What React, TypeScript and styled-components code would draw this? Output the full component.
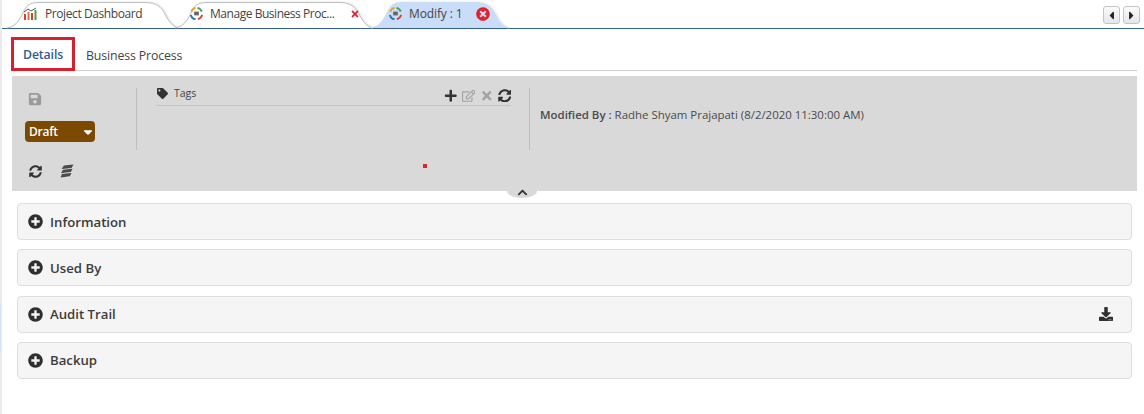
import React from "react";
import styled, { createGlobalStyle } from "styled-components";
import { FaSave, FaTag, FaPlus, FaRegEdit, FaTimes, FaSyncAlt, FaPlusCircle, FaTimesCircle, FaDownload, FaCaretLeft, FaCaretRight, FaCaretDown, FaChevronUp } from "react-icons/fa";

const Global = createGlobalStyle`
  html, body { margin: 0; padding: 0; background: #fff; }
  body { font-family: "Open Sans", "Noto Sans", sans-serif; color: #333; }
  #root { width: 1144px; height: 414px; overflow: hidden; }
`;

const Page = styled.div`
  width: 1144px; height: 414px; box-sizing: border-box; background: #fff;
  border-left: 2px solid #ebebeb; position: relative;
`;
const EdgeSliver = styled.span`
  position: absolute; left: -2px; top: 303px; width: 1px; height: 50px; background: #d4e3fb;
`;
const TabBar = styled.div`
  height: 28px; padding-left: 5px; border-bottom: 1px solid #3a6391;
  display: flex; align-items: flex-end; position: relative;
`;
const Tab = styled.div<{ $w: number; $ml?: number; $pad: number; $track: number }>`
  width: ${p => p.$w}px; height: 27px; margin-left: ${p => p.$ml ?? 0}px;
  padding-left: ${p => p.$pad}px; box-sizing: border-box; position: relative;
  display: flex; align-items: center; font-size: 12px; letter-spacing: ${p => p.$track}px; color: #444;
`;
const TabShape = styled.svg`
  position: absolute; left: 0; top: 0; width: 100%; height: 100%; overflow: visible;
  filter: drop-shadow(1px 0 1px rgba(0, 0, 0, 0.12));
`;
const TabIconBox = styled.span<{ $gap: number }>`
  position: relative; display: inline-flex; margin-right: ${p => p.$gap}px; margin-top: -3px;
`;
const TabLabel = styled.span<{ $w: number }>`
  position: relative; width: ${p => p.$w}px; white-space: nowrap; margin-top: -2px;
`;
const TabClose = styled.span<{ $size: number }>`
  position: relative; display: inline-flex; color: #e0202c; font-size: ${p => p.$size}px; margin-top: -1px;
`;
const Pager = styled.div`
  margin-left: auto; margin-right: 4px; margin-bottom: 4px; display: flex; gap: 3px;
`;
const PagerBtn = styled.span`
  width: 17px; height: 18px; box-sizing: border-box; border: 1px solid #c4c4c4; border-radius: 3px;
  background: linear-gradient(#fbfbfb, #e6e6e6); display: flex; align-items: center; justify-content: center;
  font-size: 13px; color: #222;
`;
const SubTabs = styled.div`
  margin: 8px 7px 0 9px; height: 33px; border-bottom: 1px solid #ccc; display: flex; align-items: stretch;
`;
const SubTab = styled.div<{ $active?: boolean }>`
  font-size: 12.3px; letter-spacing: -0.12px; display: flex; align-items: center; box-sizing: border-box;
  color: ${p => (p.$active ? "#2f5b94" : "#444")};
  font-weight: ${p => (p.$active ? 600 : 400)};
  width: ${p => (p.$active ? "64px" : "auto")};
  padding: ${p => (p.$active ? "1px 0 0 9px" : "3px 0 0 11px")};
  height: ${p => (p.$active ? "34px" : "33px")};
  border: ${p => (p.$active ? "3px solid #d8202c" : "none")};
`;
const Panel = styled.div`
  margin: 5px 7px 0 10px; height: 115px; background: #d9d9d9; position: relative; display: flex;
`;
const ActionCol = styled.div`
  width: 125px; flex: none; display: flex; flex-direction: column;
`;
const ActionTop = styled.div`
  height: 62px; margin-top: 12px; padding-left: 13px; border-right: 1px solid #bebebe; display: flex; flex-direction: column;
`;
const SaveIcon = styled.span`
  display: flex; color: #9a9a9a; font-size: 14px; margin: 4px 0 0 3px;
`;
const StatusBtn = styled.div`
  width: 70px; height: 21px; margin-top: 15px; background: #7b4a00; border-radius: 4px; color: #fff;
  font-size: 12px; font-weight: 600; letter-spacing: -0.25px; display: flex; align-items: center; justify-content: space-between;
  padding: 0 0 0 4px; box-sizing: border-box;
`;
const ActionBottom = styled.div`
  display: flex; gap: 18px; padding: 14px 0 0 17px; align-items: center; font-size: 13px; color: #333;
`;
const TagsCol = styled.div`
  width: 355px; flex: none; margin: 9px 0 0 19px;
`;
const TagsHead = styled.div`
  height: 20px; border-bottom: 1px solid #c4c4c4; display: flex; align-items: center; justify-content: space-between;
`;
const TagsTitle = styled.span`
  display: flex; align-items: center; gap: 6px; font-size: 10.5px; color: #444; margin: -4px 0 0 1px;
  svg { font-size: 11px; color: #333; }
`;
const TagTools = styled.span`
  display: flex; align-items: center; gap: 4.5px; font-size: 13.5px; color: #333; margin-top: 1px;
`;
const ToolIcon = styled.span<{ $muted?: boolean }>`
  display: flex; color: ${p => (p.$muted ? "#a3a3a3" : "#333")};
`;
const Divider = styled.div`
  width: 1px; height: 62px; margin: 12px 10px 0 18px; background: #bebebe; flex: none;
`;
const Modified = styled.div`
  font-size: 11.45px; color: #4a4a4a; margin-top: 31px; white-space: nowrap;
  strong { font-weight: 600; }
`;
const RedDot = styled.span`
  position: absolute; left: 411px; top: 88px; width: 4px; height: 4px; background: #e0202c;
`;
const Collapse = styled.span`
  position: absolute; left: 495px; bottom: -7px; width: 30px; height: 7px; background: #d9d9d9;
  border-radius: 0 0 15px 15px / 0 0 7px 7px; display: flex; justify-content: center; align-items: flex-start;
  font-size: 11px; color: #333; svg { margin-top: -4px; }
`;
const Accordions = styled.div`
  margin: 12px 12px 0 15px; display: flex; flex-direction: column; gap: 9.33px;
`;
const Accordion = styled.div`
  height: 37px; box-sizing: border-box; background: #f5f5f5; border: 1px solid #dedede; border-radius: 4px;
  display: flex; align-items: center; padding: 0 18px 0 10px; font-size: 13.2px; font-weight: 600; color: #3c3c3c;
`;
const AccIcon = styled.span`
  display: flex; font-size: 15px; color: #2f2f2f; margin-right: 7px;
`;
const AccEnd = styled.span`
  margin-left: auto; display: flex; font-size: 14px; color: #2f2f2f;
`;

const Ring = () => (
  <svg width="15" height="15" viewBox="0 0 16 16" fill="none" strokeWidth="2">
    <path d="M2.5 6A6 6 0 0 1 7 2" stroke="#e8a020" />
    <path d="M9 2a6 6 0 0 1 4.6 4" stroke="#3aa655" />
    <path d="M14 9.5A6 6 0 0 1 9.5 14" stroke="#d8402c" />
    <path d="M7 14A6 6 0 0 1 2 9.5" stroke="#2d6fb5" />
    <rect x="5.5" y="6" width="5" height="4" fill="#666" />
  </svg>
);
const Bars = () => (
  <svg width="16" height="13" viewBox="0 0 16 13">
    <rect x="1" y="7" width="2" height="6" fill="#d8402c" />
    <rect x="4.5" y="5" width="2" height="8" fill="#e07a30" />
    <rect x="8" y="6" width="2" height="7" fill="#d8402c" />
    <rect x="11.5" y="3" width="2" height="10" fill="#5a9a4a" />
    <path d="M1 5 L5 2 L8 4 L13 1" stroke="#555" strokeWidth="1" fill="none" />
  </svg>
);
const Stack = () => (
  <svg width="14" height="14" viewBox="0 0 14 14" fill="#4a4a4a">
    <path d="M4 1.5 C7 1 10 1 13.5 .5 L11.5 4 C8 4.5 5 4.5 1.5 5 Z" />
    <path d="M3 5.8 C6 5.5 9 5.2 12.5 4.8 L10.8 8 C7.5 8.5 4 8.7 1 9.2 Z" />
    <path d="M2 10 C5 9.7 8 9.5 11.5 9 L9.8 12.2 C6.5 12.7 3 13 .5 13.4 Z" />
  </svg>
);
const shape = (w: number, fill: string, stroke: string) => (
  <TabShape viewBox={`0 0 ${w} 27`} preserveAspectRatio="none">
    <path d={`M0 27 C8 26 12 20 16 12 C19 5 22 1.5 32 1.5 H${w - 34} C${w - 22} 1.5 ${w - 18} 6 ${w - 14} 13 C${w - 10} 21 ${w - 6} 26 ${w} 27`} fill={fill} stroke={stroke} strokeWidth="1" />
  </TabShape>
);

export default function App() {
  return (
    <Page>
      <Global />
      <EdgeSliver />
      <TabBar>
        <Tab $w={172} $pad={16} $track={-0.41}>
          {shape(172, "#fff", "#bdbdbd")}
          <TabIconBox $gap={6}><Bars /></TabIconBox>
          <TabLabel $w={100}>Project Dashboard</TabLabel>
        </Tab>
        <Tab $w={198} $ml={-4} $pad={14} $track={-0.46}>
          {shape(198, "#fff", "#bdbdbd")}
          <TabIconBox $gap={6}><Ring /></TabIconBox>
          <TabLabel $w={140}>Manage Business Proc...</TabLabel>
          <TabClose $size={10}><FaTimes /></TabClose>
        </Tab>
        <Tab $w={138} $ml={-2} $pad={17} $track={-0.12}>
          {shape(138, "#c9dcf8", "#c9dcf8")}
          <TabIconBox $gap={6}><Ring /></TabIconBox>
          <TabLabel $w={67}>Modify : 1</TabLabel>
          <TabClose $size={14}><FaTimesCircle /></TabClose>
        </Tab>
        <Pager>
          <PagerBtn><FaCaretLeft /></PagerBtn>
          <PagerBtn><FaCaretRight /></PagerBtn>
        </Pager>
      </TabBar>
      <SubTabs>
        <SubTab $active>Details</SubTab>
        <SubTab>Business Process</SubTab>
      </SubTabs>
      <Panel>
        <ActionCol>
          <ActionTop>
            <SaveIcon><FaSave /></SaveIcon>
            <StatusBtn>Draft<FaCaretDown size={14} /></StatusBtn>
          </ActionTop>
          <ActionBottom>
            <FaSyncAlt />
            <Stack />
          </ActionBottom>
        </ActionCol>
        <TagsCol>
          <TagsHead>
            <TagsTitle><FaTag />Tags</TagsTitle>
            <TagTools>
              <ToolIcon><FaPlus /></ToolIcon>
              <ToolIcon $muted><FaRegEdit /></ToolIcon>
              <ToolIcon $muted><FaTimes /></ToolIcon>
              <ToolIcon><FaSyncAlt /></ToolIcon>
            </TagTools>
          </TagsHead>
        </TagsCol>
        <Divider />
        <Modified><strong>Modified By :</strong> Radhe Shyam Prajapati (8/2/2020 11:30:00 AM)</Modified>
        <RedDot />
        <Collapse><FaChevronUp /></Collapse>
      </Panel>
      <Accordions>
        <Accordion><AccIcon><FaPlusCircle /></AccIcon>Information</Accordion>
        <Accordion><AccIcon><FaPlusCircle /></AccIcon>Used By</Accordion>
        <Accordion><AccIcon><FaPlusCircle /></AccIcon>Audit Trail<AccEnd><FaDownload /></AccEnd></Accordion>
        <Accordion><AccIcon><FaPlusCircle /></AccIcon>Backup</Accordion>
      </Accordions>
    </Page>
  );
}
